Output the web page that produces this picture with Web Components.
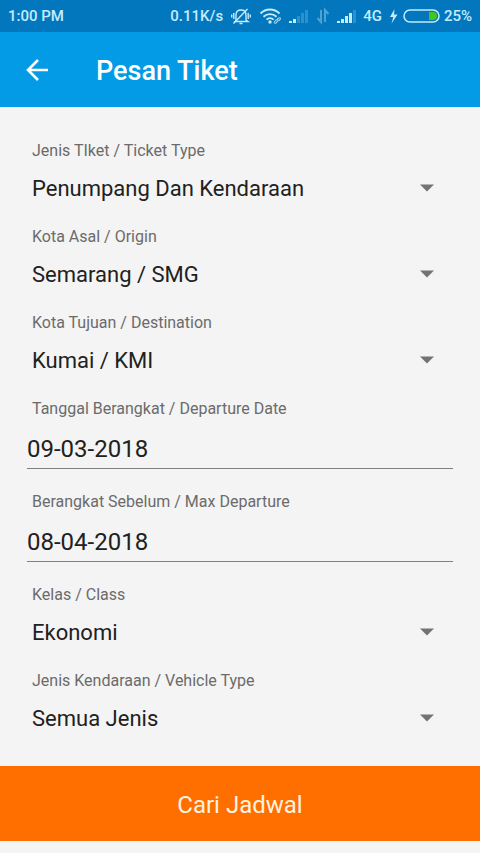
<!DOCTYPE html>
<html lang="id">
<head>
<meta charset="utf-8">
<meta name="viewport" content="width=device-width, initial-scale=1">
<title>Pesan Tiket</title>
<style>
  body { margin: 0; background: #f4f4f4; color: #212121; font-family: Roboto, "Liberation Sans", sans-serif; }
</style>
</head>
<body>
<ticket-page>
  <status-bar slot="top" time="1:00 PM" speed="0.11K/s" network="4G" battery="25%"></status-bar>
  <app-bar slot="top">Pesan Tiket</app-bar>
  <select-field label="Jenis TIket / Ticket Type" value="Penumpang Dan Kendaraan"></select-field>
  <select-field label="Kota Asal / Origin" value="Semarang / SMG"></select-field>
  <select-field label="Kota Tujuan / Destination" value="Kumai / KMI"></select-field>
  <date-field label="Tanggal Berangkat / Departure Date" value="09-03-2018"></date-field>
  <date-field label="Berangkat Sebelum / Max Departure" value="08-04-2018"></date-field>
  <select-field label="Kelas / Class" value="Ekonomi"></select-field>
  <select-field label="Jenis Kendaraan / Vehicle Type" value="Semua Jenis"></select-field>
  <submit-button slot="bottom">Cari Jadwal</submit-button>
</ticket-page>

<script>
  class BaseElement extends HTMLElement {
    connectedCallback() {
      if (this.shadowRoot) return;
      this.attachShadow({ mode: 'open' }).innerHTML = this.render();
    }
    attr(name) { return this.getAttribute(name) || ''; }
  }

  customElements.define('ticket-page', class extends BaseElement {
    render() {
      return `
        <style>
          :host { display: block; padding-bottom: 12px; }
          main { display: grid; gap: 18px; padding: 33px 27px 28px; }
        </style>
        <header><slot name="top"></slot></header>
        <main><slot></slot></main>
        <slot name="bottom"></slot>`;
    }
  });

  const signal = (lit) => `
    <svg width="24" height="18" viewBox="0 0 24 18" aria-hidden="true">
      ${[[2, 2], [6, 4], [10, 7], [14, 10], [18, 13]].map(([x, h], i) =>
        `<rect x="${x}" y="${16 - h}" width="3" height="${h}" fill="currentColor" opacity="${i < lit ? 1 : 0.22}"/>`).join('')}
    </svg>`;

  customElements.define('status-bar', class extends BaseElement {
    render() {
      return `
        <style>
          :host { display: flex; align-items: center; gap: 4px; height: 32px; padding: 0 8px;
            background: #0277bd; color: #c4ecfd; font-size: 15px; font-weight: 500; line-height: 20px; }
          .time { margin-right: auto; }
          svg { display: block; flex: none; }
        </style>
        <span class="time">${this.attr('time')}</span>
        <span>${this.attr('speed')}</span>
        <svg width="26" height="20" viewBox="0 0 26 20" fill="none" stroke="currentColor" stroke-width="1.4" aria-hidden="true">
          <path d="M9 14.5V9c0-3.2 2-5 5-5s5 1.800 5 5v5l2 1.500H8zM12.500 17.500h3M6.800 7v6M21.200 7v6M4.700 8.500v3M23.300 8.500v3"/>
          <path d="M6.500 17.500L20.500 3"/>
        </svg>
        <svg width="26" height="20" viewBox="0 0 26 20" fill="none" stroke="currentColor" stroke-width="1.900" aria-hidden="true">
          <path d="M3.500 7.500c5.300-5.300 13.700-5.300 19 0M6.500 10.700c3.700-3.500 9.300-3.500 13 0M9.500 13.600c2-1.900 5-1.900 7 0"/>
          <circle cx="13" cy="16" r="1.700" fill="currentColor" stroke="none"/>
          <path d="M17 16.500l2-2.500q1.500-1 2 .5l-1.500 2q-1.500 1.500-2.500 0M20 13.500l1.500-1.500q2-.8 2 1l-2 2" stroke-width="1.200" opacity=".75"/>
        </svg>
        ${signal(2)}
        <svg width="16" height="18" viewBox="0 0 16 18" fill="none" stroke="currentColor" stroke-width="2" opacity=".38" aria-hidden="true">
          <path d="M6 3v12L2.500 11M10 15V3l3.500 4"/>
        </svg>
        ${signal(4)}
        <span>${this.attr('network')}</span>
        <svg width="13" height="18" viewBox="0 0 13 18" fill="currentColor" aria-hidden="true">
          <path d="M8.500 2L4 10h3.300L5.500 16.500 11.500 7.500H8z"/>
        </svg>
        <svg width="37" height="16" viewBox="0 0 37 16" aria-hidden="true">
          <rect x="1" y="2" width="35" height="12" rx="6" fill="none" stroke="currentColor" stroke-width="1.500"/>
          <path d="M26 4h4a4 4 0 0 1 0 8H26z" fill="#43c51f"/>
        </svg>
        <span>${this.attr('battery')}</span>`;
    }
  });

  customElements.define('app-bar', class extends BaseElement {
    render() {
      return `
        <style>
          :host { box-sizing: border-box; display: flex; align-items: center; gap: 32px; height: 75px; padding: 2px 10px 0; background: #039be5; color: #fff; }
          button { display: grid; place-items: center; width: 54px; height: 54px; padding: 0; border: 0; background: none; color: inherit; }
          h1 { margin: 0; font-size: 27px; font-weight: 500; line-height: 36px; }
        </style>
        <button type="button" aria-label="Kembali">
          <svg width="24" height="24" viewBox="0 0 24 24" fill="none" stroke="currentColor" stroke-width="2.600" aria-hidden="true">
            <path d="M23 11H3.500M13 1L3 11l10 10"/>
          </svg>
        </button>
        <h1><slot></slot></h1>`;
    }
  });

  const fieldStyle = `
    :host { display: grid; }
    label { padding: 0 5px; color: #6b6b6b; font-size: 16px; line-height: 22px; }
    select, input { box-sizing: border-box; width: 100%; min-width: 0; margin: 0; border: 0; border-radius: 0;
      background: none; color: #212121; font-family: inherit; outline-offset: 2px; }`;

  customElements.define('select-field', class extends BaseElement {
    render() {
      return `
        <style>
          ${fieldStyle}
          :host { gap: 6px; }
          .box { display: grid; align-items: center; }
          .box > * { grid-area: 1 / 1; }
          select { appearance: none; height: 40px; padding: 0 48px 0 5px; font-size: 22px; }
          svg { justify-self: end; margin-right: 19px; pointer-events: none; }
        </style>
        <label for="control">${this.attr('label')}</label>
        <div class="box">
          <select id="control"><option selected>${this.attr('value')}</option></select>
          <svg width="14" height="8" viewBox="0 0 14 8" fill="#737373" aria-hidden="true"><path d="M0 .5h14L7 7.500z"/></svg>
        </div>`;
    }
  });

  customElements.define('date-field', class extends BaseElement {
    render() {
      return `
        <style>
          ${fieldStyle}
          :host { gap: 10px; margin-bottom: 4px; }
          input { height: 39px; padding: 0; border-bottom: 1px solid #808080; font-size: 24px; }
        </style>
        <label for="control">${this.attr('label')}</label>
        <input id="control" type="text" inputmode="numeric" value="${this.attr('value')}">`;
    }
  });

  customElements.define('submit-button', class extends BaseElement {
    render() {
      return `
        <style>
          :host { display: block; }
          button { display: block; width: 100%; height: 75px; padding: 2px 0 0; border: 0; background: #ff6f00; color: #fff3e0;
            font-family: inherit; font-size: 24px; line-height: 32px; }
        </style>
        <button type="button"><slot></slot></button>`;
    }
  });
</script>
</body>
</html>
